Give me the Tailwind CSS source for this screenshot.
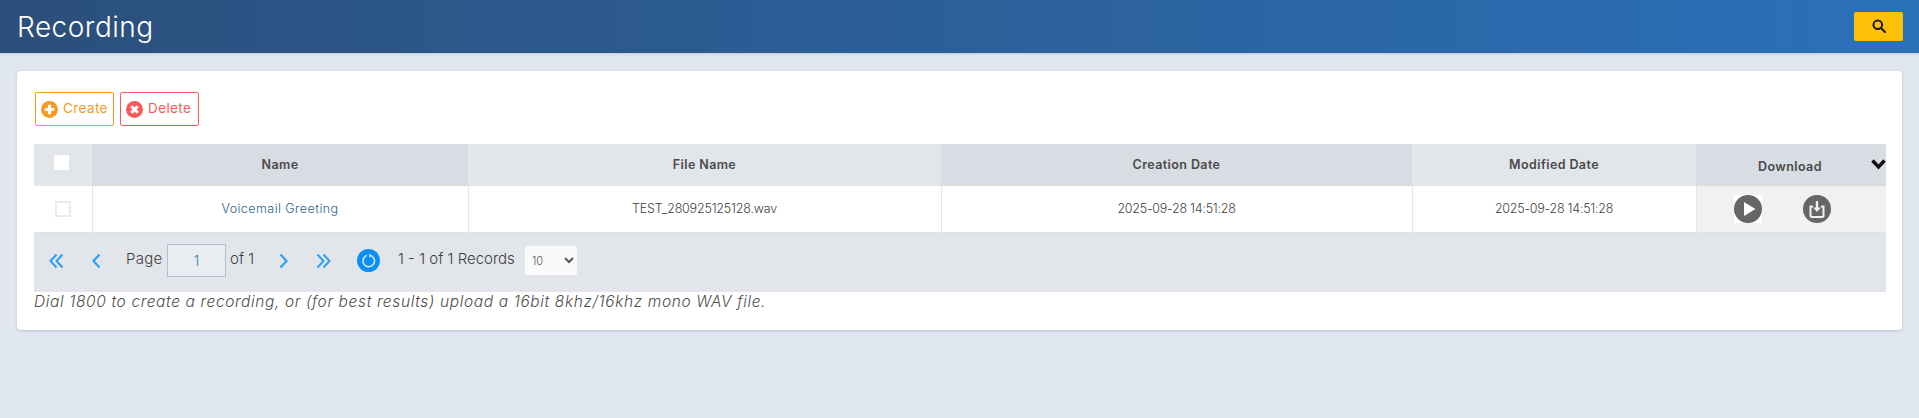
<!DOCTYPE html>
<html lang="en">
<head>
<meta charset="utf-8">
<script src="https://cdn.jsdelivr.net/npm/@tailwindcss/browser@4"></script>
<title>Recording</title>
</head>
<body class="m-0 min-h-[418px] bg-[#e1e7f1] font-['Inter','Liberation_Sans',sans-serif] text-[#4d4d4d]">
<header class="h-[53px] bg-gradient-to-r from-[#2b4f7b] to-[#2a71ba] flex items-center justify-between pl-[17px] pr-[16px] shadow-sm">
  <h1 class="text-[28px] font-light text-white leading-none tracking-[0.5px]">Recording</h1>
  <button class="w-[49px] h-[29px] bg-[#ffc107] rounded-[2px] flex items-center justify-center mb-[1px]">
    <svg width="14" height="14" viewBox="0 0 14 14" fill="none" stroke="#1a1a1a" stroke-width="2"><circle cx="5.800" cy="5.800" r="4.300"/><path d="M9 9l4 4" stroke-linecap="round"/></svg>
  </button>
</header>
<main class="px-[17px] pt-[18px]">
  <section class="h-[259px] bg-white rounded-[4px] shadow-[0_1px_3px_rgba(60,80,110,0.25)] pl-[17px] pr-[17px] pt-[21px]">
    <div class="flex gap-[6px] pl-[1px] h-[34px]">
      <button class="w-[79px] h-[34px] border border-[#f39c1f] rounded-[2px] flex items-center pl-[5px] gap-[5px] text-[#f39c1f] text-[13.5px] tracking-[0.4px]">
        <svg width="17" height="17" viewBox="0 0 16 16"><circle cx="8" cy="8" r="8" fill="#f39c1f"/><path d="M8 3.500v9M3.500 8h9" stroke="#fff" stroke-width="3"/></svg><span class="pb-[2px]">Create</span>
      </button>
      <button class="w-[79px] h-[34px] border border-[#fb5a5c] rounded-[2px] flex items-center pl-[5px] gap-[5px] text-[#fb5a5c] text-[13.5px] tracking-[0.4px]">
        <svg width="17" height="17" viewBox="0 0 16 16"><circle cx="8" cy="8" r="8" fill="#fb5a5c"/><path d="M5 5l6 6M11 5l-6 6" stroke="#fff" stroke-width="2.800"/></svg><span class="pb-[2px]">Delete</span>
      </button>
    </div>
    <table class="mt-[18px] w-[1852px] table-fixed border-collapse text-[12.5px]">
      <colgroup><col class="w-[58px]"><col class="w-[376px]"><col class="w-[473px]"><col class="w-[471px]"><col class="w-[284px]"><col class="w-[190px]"></colgroup>
      <thead>
        <tr class="h-[42px] text-[12.5px] font-semibold text-[#4a4a4a] tracking-[0.4px]">
          <th class="bg-[#e2e5ea] p-0 align-top"><span class="block w-[15px] h-[15px] bg-white rounded-[1px] ml-[20px] mt-[11px]"></span></th>
          <th class="bg-[#d8dce3] font-semibold p-0">Name</th>
          <th class="bg-[#e2e5ea] font-semibold p-0">File Name</th>
          <th class="bg-[#d8dce3] font-semibold p-0">Creation Date</th>
          <th class="bg-[#e2e5ea] font-semibold p-0">Modified Date</th>
          <th class="bg-[#d8dce3] font-semibold p-0 relative"><span class="relative top-[2px] right-[1px]">Download</span>
            <svg class="absolute right-[0px] top-[15px]" width="15" height="11" viewBox="0 0 15 11" fill="none" stroke="#111" stroke-width="3.400"><path d="M1.500 1.500L7.500 8l6-6.500"/></svg>
          </th>
        </tr>
      </thead>
      <tbody>
        <tr class="h-[46px] text-center text-[12.5px] font-light text-[#3f3f3f] border-b border-[#dcdfe3]">
          <td class="border-r border-[#e4e6e9] p-0"><span class="block w-[16px] h-[16px] ml-[21px] border-2 border-[#eaeaea] bg-white"></span></td>
          <td class="border-r border-[#e4e6e9] pt-[1px] px-0 pb-0 text-[#2a6496] tracking-[0.45px]">Voicemail Greeting</td>
          <td class="border-r border-[#e4e6e9] pt-[1px] px-0 pb-0 tracking-[-0.2px]">TEST_280925125128.wav</td>
          <td class="border-r border-[#e4e6e9] pt-[1px] px-0 pb-0 tracking-[-0.25px]">2025-09-28 14:51:28</td>
          <td class="border-r border-[#e4e6e9] pt-[1px] px-0 pb-0 tracking-[-0.25px]">2025-09-28 14:51:28</td>
          <td class="bg-[#f1f1f1] p-0">
            <div class="flex items-center pl-[37px] gap-[41px]">
              <svg class="bg-white" width="28" height="28" viewBox="0 0 28 28"><circle cx="14" cy="14" r="14" fill="#666"/><path d="M10 7v14l11.500-7z" fill="#fff"/></svg>
              <svg width="28" height="28" viewBox="0 0 28 28" fill="none"><circle cx="14" cy="14" r="14" fill="#666"/><path d="M10 11.500H7.500v9a1.500 1.500 0 0 0 1.500 1.500h10a1.500 1.500 0 0 0 1.500-1.500v-9H18" stroke="#f1f1f1" stroke-width="2"/><path d="M14 6v8" stroke="#f1f1f1" stroke-width="2.400"/><path d="M10 12.500h8l-4 4.500z" fill="#f1f1f1"/></svg>
            </div>
          </td>
        </tr>
      </tbody>
    </table>
    <div class="w-[1852px] h-[59px] bg-[#e2e5ea] flex items-center pb-[3px] text-[15px] font-light text-[#3f3f3f] whitespace-nowrap">
      <svg class="ml-[15px]" width="15" height="16" viewBox="0 0 15 16" fill="none" stroke="#2f9fef" stroke-width="2"><path d="M7.500 1.500L1.500 8l6 6.500M13.500 1.500L7.500 8l6 6.500"/></svg>
      <svg class="ml-[28px]" width="9" height="16" viewBox="0 0 9 16" fill="none" stroke="#2f9fef" stroke-width="2.200"><path d="M7.500 1.500L1.500 8l6 6.500"/></svg>
      <span class="ml-[25px] w-[37px] pb-[3px] tracking-[0.3px]">Page</span>
      <input class="ml-[4px] w-[59px] h-[33px] bg-[#e9edf1] border border-[#adc2d6] text-center text-[14px] text-[#3a7cb0]" value="1" aria-label="Page">
      <span class="ml-[4px] w-[22px] pb-[3px]">of 1</span>
      <svg class="ml-[27px]" width="9" height="16" viewBox="0 0 9 16" fill="none" stroke="#2f9fef" stroke-width="2.200"><path d="M1.500 1.500l6 6.500-6 6.500"/></svg>
      <svg class="ml-[28px]" width="15" height="16" viewBox="0 0 15 16" fill="none" stroke="#2f9fef" stroke-width="2"><path d="M1.500 1.500l6 6.500-6 6.500M7.500 1.500l6 6.500-6 6.500"/></svg>
      <svg class="ml-[26px]" width="23" height="23" viewBox="0 0 23 23" fill="none"><circle cx="11.500" cy="11.500" r="11.500" fill="#0a90f5"/><path d="M14.500 6.800a5.800 5.800 0 1 1-4.500-.4" stroke="#d8edfd" stroke-width="1.500"/><path d="M12.300 4.500l3 2.300-3 1.700z" fill="#d8edfd"/></svg>
      <span class="ml-[18px] w-[115px] pb-[3px]">1 - 1 of 1 Records</span>
      <select class="ml-[12px] w-[52px] h-[29px] bg-[#fafafa] rounded-[2px] text-[11px] text-[#555] pl-[3px]" aria-label="Records per page"><option>10</option></select>
    </div>
    <p class="italic font-light text-[15.5px] leading-[20px] tracking-[0.63px] text-[#4f4f4f]">Dial 1800 to create a recording, or (for best results) upload a 16bit 8khz/16khz mono WAV file.</p>
  </section>
</main>
</body>
</html>
